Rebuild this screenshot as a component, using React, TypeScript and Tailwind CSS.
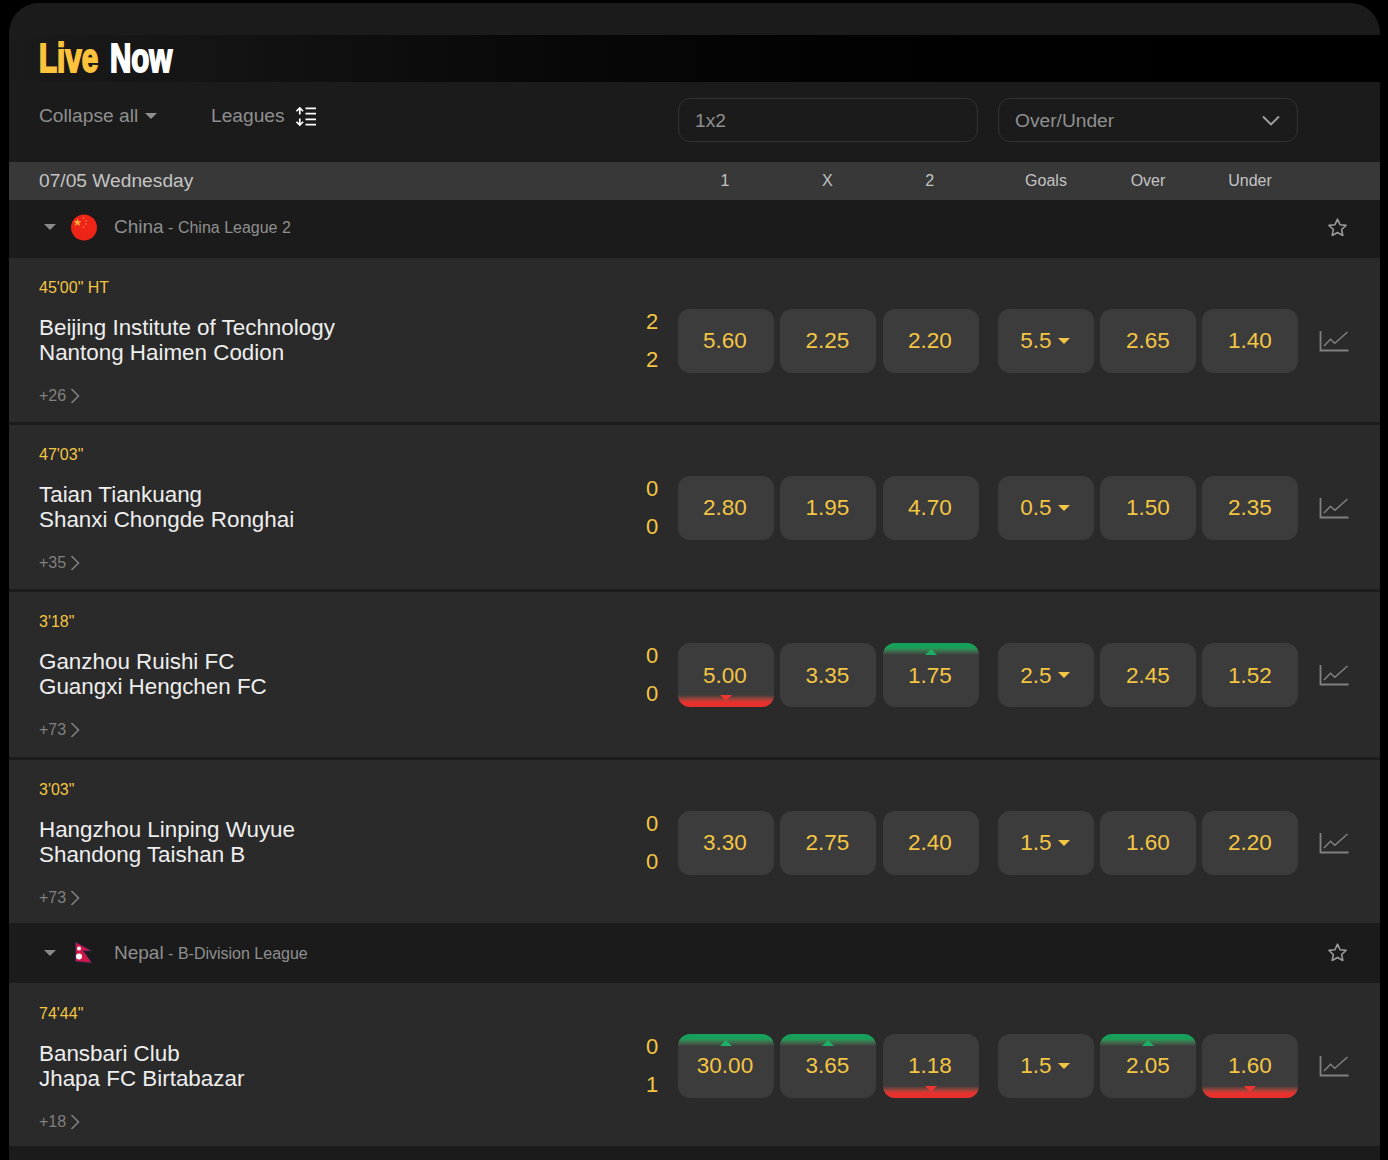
type Move = "up" | "down" | undefined;
type Odd = { v: string; move?: Move };

type Match = {
  time: string;
  home: string;
  away: string;
  score: [string, string];
  more: string;
  odds: Odd[];
  goals: string;
  ou: Odd[];
};

const china: Match[] = [
  {
    time: `45'00" HT`,
    home: "Beijing Institute of Technology",
    away: "Nantong Haimen Codion",
    score: ["2", "2"],
    more: "+26",
    odds: [{ v: "5.60" }, { v: "2.25" }, { v: "2.20" }],
    goals: "5.5",
    ou: [{ v: "2.65" }, { v: "1.40" }],
  },
  {
    time: `47'03"`,
    home: "Taian Tiankuang",
    away: "Shanxi Chongde Ronghai",
    score: ["0", "0"],
    more: "+35",
    odds: [{ v: "2.80" }, { v: "1.95" }, { v: "4.70" }],
    goals: "0.5",
    ou: [{ v: "1.50" }, { v: "2.35" }],
  },
  {
    time: `3'18"`,
    home: "Ganzhou Ruishi FC",
    away: "Guangxi Hengchen FC",
    score: ["0", "0"],
    more: "+73",
    odds: [{ v: "5.00", move: "down" }, { v: "3.35" }, { v: "1.75", move: "up" }],
    goals: "2.5",
    ou: [{ v: "2.45" }, { v: "1.52" }],
  },
  {
    time: `3'03"`,
    home: "Hangzhou Linping Wuyue",
    away: "Shandong Taishan B",
    score: ["0", "0"],
    more: "+73",
    odds: [{ v: "3.30" }, { v: "2.75" }, { v: "2.40" }],
    goals: "1.5",
    ou: [{ v: "1.60" }, { v: "2.20" }],
  },
];

const nepal: Match[] = [
  {
    time: `74'44"`,
    home: "Bansbari Club",
    away: "Jhapa FC Birtabazar",
    score: ["0", "1"],
    more: "+18",
    odds: [{ v: "30.00", move: "up" }, { v: "3.65", move: "up" }, { v: "1.18", move: "down" }],
    goals: "1.5",
    ou: [{ v: "2.05", move: "up" }, { v: "1.60", move: "down" }],
  },
];

function OddButton({ odd }: { odd: Odd }) {
  return (
    <div className="relative flex h-16 w-24 items-center justify-center overflow-hidden rounded-xl bg-[#3c3c3c] text-[22.5px] text-[#f3c544]">
      {odd.move === "up" && (
        <div className="absolute inset-x-0 top-0 flex h-3 justify-center bg-gradient-to-b from-[#16a05a] from-40% to-[#3c3c3c]">
          <div className="mt-1.5 h-0 w-0 border-x-[6px] border-b-[6px] border-x-transparent border-b-[#1fae66]" />
        </div>
      )}
      {odd.move === "down" && (
        <div className="absolute inset-x-0 bottom-0 flex h-3 justify-center bg-gradient-to-t from-[#e8302d] from-40% to-[#3c3c3c]">
          <div className="h-0 w-0 border-x-[6px] border-t-[6px] border-x-transparent border-t-[#ee3532]" />
        </div>
      )}
      <span className="relative">{odd.v}</span>
    </div>
  );
}

function ChartIcon() {
  return (
    <svg width="30" height="22" viewBox="0 0 30 22" fill="none" stroke="#808080" strokeWidth="1.8">
      <path d="M1.5 1v19.5h28" />
      <path d="M5 16l6.5-6.7 4.3 4L28.5 2" strokeWidth="1.5" />
    </svg>
  );
}

function MoreChevron() {
  return (
    <svg width="10" height="16" viewBox="0 0 10 16" fill="none" stroke="#808080" strokeWidth="1.6">
      <path d="M1.5 1l7 7-7 7" />
    </svg>
  );
}

function MatchRow({ m, last, nudge }: { m: Match; last?: boolean; nudge?: boolean }) {
  return (
    <div className={`flex bg-[#2a2a2a] ${last ? "h-[163.4px]" : "h-[167.2px] border-b-[3px] border-[#1c1c1c]"}`}>
      <div className="flex w-[669px] shrink-0 pl-[30px]">
        <div className="flex flex-1 flex-col">
          <div className={`${nudge ? "mt-[21px]" : "mt-5"} h-5 text-[16px] leading-5 text-[#f3c544]`}>{m.time}</div>
          <div className="mt-[17px] text-[22.4px] leading-[25px] text-[#eeeeee]">
            <div>{m.home}</div>
            <div>{m.away}</div>
          </div>
          <div className="mt-[21px] flex items-center gap-1 text-[16px] leading-5 text-[#808080]">
            {m.more}
            <MoreChevron />
          </div>
        </div>
        <div className="mr-[9px] mt-[64px] flex h-[38px] w-[34px] flex-col justify-between text-center text-[22px] text-[#f3c544]">
          <div className="h-0 -translate-y-[19px] leading-[38px]">{m.score[0]}</div>
          <div className="h-0 -translate-y-[19px] leading-[38px]">{m.score[1]}</div>
        </div>
      </div>
      <div className="mt-[51px] flex items-start">
        <div className="flex w-[301px] gap-[6.4px] [&>div]:pr-[2px]">
          {m.odds.map((o, i) => (
            <OddButton key={i} odd={o} />
          ))}
        </div>
        <div className="ml-[19px] flex w-[300px] justify-between">
          <div className="flex h-16 w-24 items-center justify-center gap-[6px] rounded-xl bg-[#3c3c3c] pr-[2px] text-[22.5px] text-[#f3c544]">
            {m.goals}
            <div className="h-0 w-0 border-x-[6px] border-t-[6px] border-x-transparent border-t-[#f3c544]" />
          </div>
          {m.ou.map((o, i) => (
            <OddButton key={i} odd={o} />
          ))}
        </div>
        <div className="ml-[21px] flex h-16 items-center">
          <ChartIcon />
        </div>
      </div>
    </div>
  );
}

function LeagueRow({ country, league, flag, tall }: { country: string; league: string; flag: React.ReactNode; tall?: boolean }) {
  return (
    <div className={`flex items-center bg-[#1b1b1b] pl-[35px] pr-[32px] ${tall ? "h-[60px]" : "h-[58px] pb-1"}`}>
      <div className="h-0 w-0 border-x-[6px] border-t-[6px] border-x-transparent border-t-[#8a8a8a]" />
      <div className="ml-[15px] flex w-[26px] justify-center">{flag}</div>
      <div className="ml-[17px] text-[16px] text-[#8f8f8f]">
        <span className="text-[19px]">{country}</span> - {league}
      </div>
      <svg width="21" height="21" viewBox="0 0 24 24" fill="none" stroke="#9a9a9a" strokeWidth="1.8" strokeLinejoin="round" className="ml-auto">
        <path d="M12 2.5l2.9 6.3 6.9.8-5.1 4.7 1.4 6.8-6.1-3.4-6.1 3.4 1.4-6.8-5.1-4.7 6.9-.8z" />
      </svg>
    </div>
  );
}

function ChinaFlag() {
  return (
    <svg width="26" height="27" viewBox="0 0 26 27">
      <circle cx="13" cy="13.5" r="13" fill="#ee2418" />
      <path d="M6.5 4.5l1 2.8h3l-2.4 1.8.9 2.9-2.5-1.7-2.5 1.7.9-2.9-2.4-1.8h3z" fill="#fbb23a" />
      <circle cx="12.5" cy="4" r="0.8" fill="#f59a30" />
      <circle cx="15" cy="6.8" r="0.8" fill="#f59a30" />
      <circle cx="15" cy="10" r="0.8" fill="#f59a30" />
      <circle cx="12.5" cy="13" r="0.8" fill="#f59a30" />
    </svg>
  );
}

function NepalFlag() {
  return (
    <svg width="20" height="24" viewBox="0 0 20 24">
      <path d="M1.5 1l16.5 9H9.5L18 22 1.5 20.5z" fill="#cf1746" stroke="#1a2a5e" strokeWidth="0.7" strokeLinejoin="round" />
      <circle cx="5" cy="7.5" r="2" fill="#fff" />
      <circle cx="5" cy="15.5" r="3" fill="#fff" />
    </svg>
  );
}

function SortIcon() {
  return (
    <svg width="21" height="21" viewBox="0 0 22 21" fill="none" stroke="#ffffff" strokeWidth="1.8">
      <path d="M5 1.5v7M1.5 5L5 1.5 8.5 5" />
      <path d="M5 12.5v7M1.5 16L5 19.5 8.5 16" />
      <path d="M11 2h11M11 7.5h11M11 13.5h11M11 19h11" />
    </svg>
  );
}

export default function App() {
  return (
    <div className="h-[1160px] overflow-hidden bg-black pl-[9px] pt-[3px] font-['Liberation_Sans',Arial,sans-serif]">
      <div className="w-[1371px] overflow-hidden rounded-t-[30px] bg-[#1b1b1b]">
        <div className="h-8" />
        <div className="flex h-[47px] items-center bg-gradient-to-r from-[#1b1b1b] to-black pl-[30px]">
          <div className="origin-left scale-x-[0.72] whitespace-nowrap text-[41px] font-bold leading-[47px] [word-spacing:5px] [-webkit-text-stroke:2px_currentColor]">
            <span className="text-[#fdc33c]">Live</span> <span className="text-white">Now</span>
          </div>
        </div>
        <div className="flex h-20 pl-[30px]">
          <div className="flex w-[639px] items-start pt-[21px] text-[19.2px] leading-[26px] text-[#8f8f8f]">
            <div className="flex h-[26px] w-[172px] items-center gap-[7px]">
              Collapse all
              <div className="h-0 w-0 border-x-[6.5px] border-t-[6px] border-x-transparent border-t-[#8f8f8f]" />
            </div>
            <div className="flex h-[26px] items-center gap-[10px]">
              Leagues
              <SortIcon />
            </div>
          </div>
          <div className="flex gap-5 pt-4 text-[19.2px] text-[#8f8f8f]">
            <div className="flex h-11 w-[300px] items-center rounded-xl border border-[#333333] px-4 pt-[2px]">1x2</div>
            <div className="flex h-11 w-[300px] items-center justify-between rounded-xl border border-[#333333] pl-4 pr-[17px]">
              <span className="pt-[2px]">Over/Under</span>
              <svg width="18" height="11" viewBox="0 0 18 11" fill="none" stroke="#a0a0a0" strokeWidth="1.9">
                <path d="M1 1.5l8 8 8-8" />
              </svg>
            </div>
          </div>
        </div>
        <div className="flex h-[38px] items-center bg-[#383838] pl-[30px] text-[#c4c4c4]">
          <div className="w-[639px] text-[19.2px]">07/05 Wednesday</div>
          <div className="flex w-[301px] gap-[6.4px] text-center text-[16px] [&>div]:pr-[2px]">
            <div className="w-24">1</div>
            <div className="w-24">X</div>
            <div className="w-24">2</div>
          </div>
          <div className="ml-[19px] flex w-[300px] justify-between text-center text-[16px]">
            <div className="w-24">Goals</div>
            <div className="w-24">Over</div>
            <div className="w-24">Under</div>
          </div>
        </div>
        <LeagueRow country="China" league="China League 2" flag={<ChinaFlag />} />
        {china.map((m, i) => (
          <MatchRow key={i} m={m} last={i === china.length - 1} />
        ))}
        <LeagueRow country="Nepal" league="B-Division League" flag={<NepalFlag />} tall />
        {nepal.map((m, i) => (
          <MatchRow key={i} m={m} last nudge />
        ))}
        <div className="h-5 bg-[#1b1b1b]" />
      </div>
    </div>
  );
}
